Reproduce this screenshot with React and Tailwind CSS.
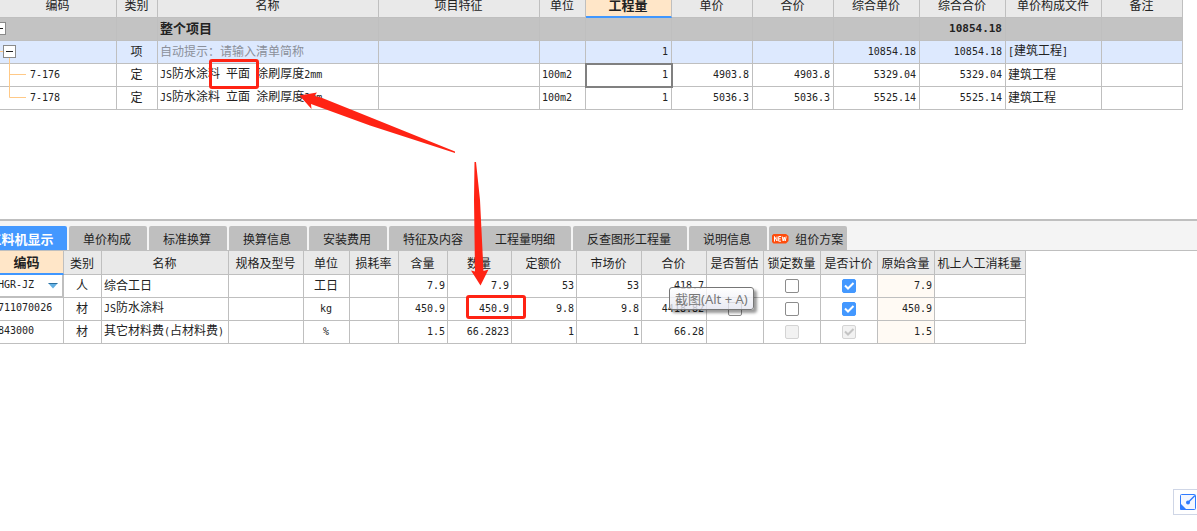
import React from "react";

const MONO = "font-['DejaVu_Sans_Mono','Liberation_Mono',monospace] text-[10px]";

/* Half-width runs are set in a 6px monospace, full-width runs in 12px glyphs. */
function T({ children }) {
  const runs = String(children).match(/[\u0020-\u007e]+|[^\u0020-\u007e]+/g) || [];
  return runs.map((run, i) =>
    /^[\u0020-\u007e]/.test(run) ? (
      <span key={i} className={MONO + " whitespace-pre"}>{run}</span>
    ) : (
      <span key={i}>{run}</span>
    )
  );
}

const BOX = "h-[23px] border-r border-b border-[#bfbfbf] p-0 font-normal whitespace-nowrap";
const CELL = BOX + " overflow-hidden pb-0.5";

const quantityColumns = [
  ["编码", "w-[117px]"],
  ["类别", "w-[41px]"],
  ["名称", "w-[221px]"],
  ["项目特征", "w-[161px]"],
  ["单位", "w-[46px]"],
  ["工程量", "w-[86px]"],
  ["单价", "w-[81px]"],
  ["合价", "w-[81px]"],
  ["综合单价", "w-[86px]"],
  ["综合合价", "w-[86px]"],
  ["单价构成文件", "w-[96px]"],
  ["备注", "w-[81px]"],
];

const quantityRows = [
  { code: "", kind: "", name: "整个项目", unit: "", qty: "", price: "", sum: "", allPrice: "", allSum: "10854.18", file: "", tree: "root", row: "bg-[#c3c3c3] font-bold" },
  { code: "", kind: "项", name: "自动提示：请输入清单简称", hint: true, unit: "", qty: "1", price: "", sum: "", allPrice: "10854.18", allSum: "10854.18", file: "[建筑工程]", tree: "item", row: "bg-[#dde9fe]" },
  { code: "7-176", kind: "定", name: "JS防水涂料 平面 涂刷厚度2mm", unit: "100m2", qty: "1", price: "4903.8", sum: "4903.8", allPrice: "5329.04", allSum: "5329.04", file: "建筑工程", tree: "branch", active: true, row: "bg-white" },
  { code: "7-178", kind: "定", name: "JS防水涂料 立面 涂刷厚度2mm", unit: "100m2", qty: "1", price: "5036.3", sum: "5036.3", allPrice: "5525.14", allSum: "5525.14", file: "建筑工程", tree: "last", row: "bg-white" },
];

function Toggle({ className }) {
  return (
    <button type="button" aria-label="折叠" className={"block shrink-0 " + className}>
      <svg width="13" height="13" viewBox="0 0 13 13" className="block">
        <rect x="0.5" y="0.5" width="12" height="12" fill="#fff" stroke="#8a8a8a" />
        <path d="M3 6.5H10" stroke="#222" />
      </svg>
    </button>
  );
}

function Tree({ kind }) {
  if (kind === "root") return <Toggle className="-ml-[7px]" />;
  if (kind === "item")
    return (
      <>
        <svg width="3" height="22" className="block shrink-0"><path d="M0 10.5H3" stroke="#ffc987" /></svg>
        <Toggle className="" />
      </>
    );
  return (
    <svg width="30" height="22" className="block shrink-0 overflow-visible">
      <path d={kind === "last" ? "M9.5 -1V10.5H26" : "M9.5 -6V22M9.5 10.5H26"} stroke="#ffc987" fill="none" />
    </svg>
  );
}

function QuantityTable() {
  return (
    <table className="w-[1183px] table-fixed border-separate border-spacing-0">
      <thead>
        <tr>
          {quantityColumns.map(([label, width]) => (
            <th
              key={label}
              scope="col"
              className={
                "h-[18px] border-r border-[#bfbfbf] p-0 pr-px align-top leading-[10px] whitespace-nowrap " +
                width +
                (label === "工程量" ? " border-b-2 border-b-[#4097ff] bg-[#ffe6c8] pr-0.5 text-[13px] font-bold" : " border-b bg-[#e9e9e9] font-normal")
              }
            >
              {label}
            </th>
          ))}
        </tr>
      </thead>
      <tbody>
        {quantityRows.map((r) => (
          <tr key={r.tree} className={r.row}>
            <td className={BOX}>
              <div className="flex h-[22px] items-center pb-px">
                <Tree kind={r.tree} />
                <T>{r.code}</T>
              </div>
            </td>
            <td className={CELL + " pr-px text-center"}>{r.kind}</td>
            <td className={CELL + " pl-0.5" + (r.hint ? " text-[#8b909a]" : "")}>
              {r.tree === "root" ? <span className="text-[13px] font-bold">{r.name}</span> : <T>{r.name}</T>}
            </td>
            <td className={CELL} />
            <td className={CELL + " pl-0.5"}><T>{r.unit}</T></td>
            <td className={CELL + " text-right pr-[3px]" + (r.active ? " outline-2 -outline-offset-1 outline-[#808080]" : "")}><T>{r.qty}</T></td>
            <td className={CELL + " text-right pr-[3px]"}><T>{r.price}</T></td>
            <td className={CELL + " text-right pr-[3px]"}><T>{r.sum}</T></td>
            <td className={CELL + " text-right pr-[3px]"}><T>{r.allPrice}</T></td>
            <td className={CELL + " text-right pr-[3px]"}>
              {r.tree === "root" ? <b className="font-['DejaVu_Sans_Mono',monospace] text-[11px]">{r.allSum}</b> : <T>{r.allSum}</T>}
            </td>
            <td className={CELL + " pl-0.5"}><T>{r.file}</T></td>
            <td className={CELL} />
          </tr>
        ))}
      </tbody>
    </table>
  );
}

const tabs = ["单价构成", "标准换算", "换算信息", "安装费用", "特征及内容", "工程量明细", "反查图形工程量", "说明信息"];

function Tabs() {
  return (
    <nav className="flex gap-0.5 overflow-hidden border-t-2 border-b border-[#bfbfbf] bg-[#f4f4f4] pt-[5px] whitespace-nowrap">
      <button type="button" className="-ml-[23px] flex h-6 w-[90px] shrink-0 items-center justify-center rounded-t-[2px] bg-[#4398ff] pt-0.5 pr-0.5 text-[13px] font-bold text-white">
        工料机显示
      </button>
      {tabs.map((t) => (
        <button key={t} type="button" className="flex h-6 shrink-0 items-center rounded-t-[2px] bg-[#bfbfbf] pt-0.5 pr-4 pl-3.5">
          {t}
        </button>
      ))}
      <button type="button" className="flex h-6 shrink-0 items-center gap-1.5 rounded-t-[2px] bg-[#bfbfbf] pt-0.5 pr-1 pl-[3px]">
        <svg width="17" height="10" viewBox="0 0 17 10" className="block">
          <path d="M1.5 0H14L16.5 2V7L14 9.5H1.5L0 8V1.5Z" fill="#ff4d0d" />
          <path d="M2.5 7.5V2.5L5 7V2.5M9 2.5H6.7V7.2H9M6.7 4.8H8.7M10.2 2.5L11.2 7L12.2 3L13.2 7L14.2 2.5" fill="none" stroke="#fff" strokeWidth="1" />
        </svg>
        <span>组价方案</span>
      </button>
    </nav>
  );
}

const resourceColumns = [
  ["编码", "w-[64px]"],
  ["类别", "w-[38px]"],
  ["名称", "w-[127px]"],
  ["规格及型号", "w-[75px]"],
  ["单位", "w-[46px]"],
  ["损耗率", "w-[49px]"],
  ["含量", "w-[49px]"],
  ["数量", "w-[64px]"],
  ["定额价", "w-[65px]"],
  ["市场价", "w-[65px]"],
  ["合价", "w-[65px]"],
  ["是否暂估", "w-[57px]"],
  ["锁定数量", "w-[57px]"],
  ["是否计价", "w-[57px]"],
  ["原始含量", "w-[57px]"],
  ["机上人工消耗量", "w-[91px]"],
];

const resourceRows = [
  { code: "HGR-JZ", kind: "人", name: "综合工日", unit: "工日", nums: ["7.9", "7.9", "53", "53", "418.7"], estimate: false, original: "7.9", active: true },
  { code: "711070026", kind: "材", name: "JS防水涂料", unit: "kg", nums: ["450.9", "450.9", "9.8", "9.8", "4418.82"], estimate: true, original: "450.9" },
  { code: "843000", kind: "材", name: "其它材料费(占材料费)", unit: "%", nums: ["1.5", "66.2823", "1", "1", "66.28"], estimate: false, original: "1.5", disabled: true },
];

function Check({ label, checked = false, disabled = false }) {
  return (
    <label className="relative mx-auto block size-3.5">
      <input
        type="checkbox"
        aria-label={label}
        defaultChecked={checked}
        disabled={disabled}
        className="peer block size-3.5 appearance-none rounded-[2px] border border-[#8c8c8c] bg-white checked:border-[#4398ff] checked:bg-[#4398ff] disabled:border-[#d4d4d4] disabled:bg-[#f2f2f2]"
      />
      <svg viewBox="0 0 14 14" className="pointer-events-none absolute inset-0 hidden size-3.5 text-white peer-checked:block peer-disabled:text-[#c4c4c4]">
        <path d="M3 6.5L6 9.5L11.5 4" fill="none" stroke="currentColor" strokeWidth="2" />
      </svg>
    </label>
  );
}

function ResourceTable() {
  return (
    <table className="w-[1026px] table-fixed border-separate border-spacing-0">
      <thead>
        <tr>
          {resourceColumns.map(([label, width], i) => (
            <th
              key={label}
              scope="col"
              className={
                "h-6 border-r border-[#bfbfbf] p-0 whitespace-nowrap " +
                width +
                (i === 0 ? " border-b-2 border-b-[#4097ff] bg-[#ffe6c8] pr-2.5 text-[13px] font-bold" : " border-b bg-[#e9e9e9] pr-px font-normal")
              }
            >
              {label}
            </th>
          ))}
        </tr>
      </thead>
      <tbody>
        {resourceRows.map((r) => (
          <tr key={r.code}>
            <td className={CELL + (r.active ? " border-r-2 border-b-2 border-[#808080]" : "")}>
              <div className="-ml-0.5 flex items-center justify-between pr-1">
                <T>{r.code}</T>
                {r.active && (
                  <button type="button" aria-label="选择编码" className="block pt-0.5">
                    <svg width="10" height="6" viewBox="0 0 10 6" className="block">
                      <path d="M0.5 0.5H9.5L5 5.5Z" fill="#63b0e3" />
                      <path d="M0.5 0.5H9.5" stroke="#2a6f9f" />
                    </svg>
                  </button>
                )}
              </div>
            </td>
            <td className={CELL + " pr-px text-center"}>{r.kind}</td>
            <td className={CELL + " pl-0.5"}><T>{r.name}</T></td>
            <td className={CELL} />
            <td className={CELL + " pr-px text-center"}><T>{r.unit}</T></td>
            <td className={CELL} />
            {r.nums.map((n, i) => (
              <td key={i} className={CELL + " pr-0.5 text-right"}><T>{n}</T></td>
            ))}
            <td className={BOX}>{r.estimate && <Check label="是否暂估" />}</td>
            <td className={BOX}><Check label="锁定数量" disabled={r.disabled} /></td>
            <td className={BOX}><Check label="是否计价" checked disabled={r.disabled} /></td>
            <td className={CELL + " bg-[#fffaf4] pr-0.5 text-right"}><T>{r.original}</T></td>
            <td className={CELL} />
          </tr>
        ))}
      </tbody>
    </table>
  );
}

function Annotations() {
  return (
    <svg width="560" height="330" viewBox="0 0 560 330" className="pointer-events-none absolute top-0 left-0" fill="#ff2314">
      <rect x="210.5" y="60.5" width="47" height="27" rx="1.5" fill="none" stroke="#ff2314" strokeWidth="3" />
      <rect x="467.5" y="296.5" width="57" height="21" rx="1.5" fill="none" stroke="#ff2314" strokeWidth="3" />
      <path d="M299.5 95.5L317 92.5L314.5 96L321 97.5L372 118L455 151.5V153L370 125.5L311 104L311.5 109Z" />
      <path d="M474.5 162H476L480 200L483.5 271L488.5 269.5L480.5 285.5L471 270.5L475 271.5L474 200Z" />
    </svg>
  );
}

export default function App() {
  return (
    <main className="relative min-h-screen overflow-hidden bg-white font-['Noto_Sans_CJK_SC',sans-serif] text-[12px] leading-4 text-[#222]">
      <section className="h-[219px]">
        <QuantityTable />
      </section>
      <section>
        <Tabs />
        <ResourceTable />
      </section>
      <Annotations />
      <div role="tooltip" className="absolute top-[287px] left-[669px] flex h-[23px] items-center rounded-[3px] border border-[#767676] bg-linear-to-b from-white/80 to-[#e4e5f0]/80 px-[5px] font-['Noto_Sans','Noto_Sans_CJK_SC',sans-serif] text-[13px] whitespace-nowrap text-[#777] shadow-[3px_3px_3px_rgba(0,0,0,0.4)]">
        截图(Alt + A)
      </div>
      <button type="button" aria-label="截图" className="absolute right-0 bottom-4 flex h-[26px] w-6 items-center justify-end overflow-hidden border border-r-0 border-[#cfd6e6] bg-white">
        <svg width="17" height="16" viewBox="0 0 17 16" className="block">
          <rect x="0.5" y="0.5" width="15" height="15" rx="1" fill="#f3f7ff" stroke="#2f7bff" />
          <path d="M0 9L7 16H1Q0 16 0 15Z" fill="#2f7bff" />
          <circle cx="8" cy="8.5" r="2" fill="#2f7bff" />
          <path d="M8 8.5L15 1.5" stroke="#2f7bff" strokeWidth="1.5" />
        </svg>
      </button>
    </main>
  );
}
